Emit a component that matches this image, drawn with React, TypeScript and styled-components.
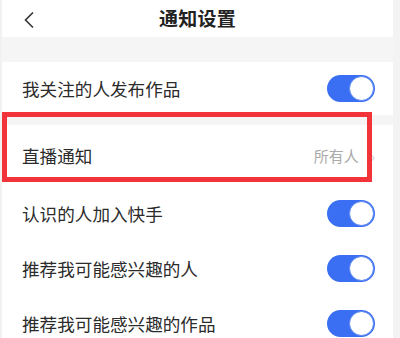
import React from "react";
import styled, { createGlobalStyle } from "styled-components";

const Global = createGlobalStyle`
  html, body { margin: 0; padding: 0; background: #f3f3f3; }
  body { font-family: "Noto Sans CJK SC", "Noto Sans", sans-serif; }
  * { box-sizing: border-box; }
`;

const Page = styled.div`
  width: 393px;
  height: 338px;
  overflow: hidden;
  background: #f5f5f5;
  display: flex;
  flex-direction: column;
  border-left: 2px solid #f1f1f1;
`;

const Header = styled.div`
  height: 37px;
  background: #fff;
  display: flex;
  align-items: center;
  justify-content: center;
  position: relative;
  flex-shrink: 0;
`;

const Back = styled.svg`
  position: absolute;
  left: 20px;
  top: 11px;
`;

const Title = styled.div`
  font-size: 19px;
  font-weight: 600;
  color: #222;
  letter-spacing: 0.3px;
  margin-top: -2px;
`;

const Gap = styled.div<{ $h: number }>`
  height: ${(p) => p.$h}px;
  flex-shrink: 0;
`;

const Row = styled.div<{ $h: number }>`
  height: ${(p) => p.$h}px;
  background: #fff;
  display: flex;
  align-items: center;
  padding: 0 18px 0 20px;
  flex-shrink: 0;
`;

const Label = styled.div`
  flex: 1;
  font-size: 17.6px;
  color: #2b2b2b;
`;

const Value = styled.div`
  font-size: 15px;
  color: #aaa;
  margin-right: 12px;
`;

const Chevron = styled.span`
  font-size: 14px;
  color: #ccc;
  margin-right: 0px;
`;

const Toggle = styled.div`
  width: 48px;
  height: 27px;
  border-radius: 14px;
  background: #3a6ff3;
  position: relative;
`;

const Knob = styled.div`
  position: absolute;
  right: 1px;
  top: 1px;
  width: 25px;
  height: 25px;
  border-radius: 50%;
  background: #fff;
  border: 1px solid #5a86f0;
`;

const Highlight = styled.div`
  position: absolute;
  left: 2px;
  top: 112px;
  width: 370px;
  height: 70px;
  border: 5px solid #f2333a;
  pointer-events: none;
`;

const Frame = styled.div`
  position: relative;
`;

const ToggleRow = ({ label, h = 55 }: { label: string; h?: number }) => (
  <Row $h={h}>
    <Label>{label}</Label>
    <Toggle>
      <Knob />
    </Toggle>
  </Row>
);

export default function App() {
  return (
    <>
      <Global />
      <Frame>
        <Page>
          <Header>
            <Back width="14" height="18" viewBox="0 0 14 18">
              <path d="M11 1.5 L3.5 9 L11 16.5" fill="none" stroke="#333" strokeWidth="1.6" />
            </Back>
            <Title>通知设置</Title>
          </Header>
          <Gap $h={25} />
          <ToggleRow label="我关注的人发布作品" h={53} />
          <Gap $h={10} />
          <Row $h={61}>
            <Label>直播通知</Label>
            <Value>所有人</Value>
            <Chevron>›</Chevron>
          </Row>
          <ToggleRow label="认识的人加入快手" />
          <ToggleRow label="推荐我可能感兴趣的人" />
          <ToggleRow label="推荐我可能感兴趣的作品" />
        </Page>
        <Highlight />
      </Frame>
    </>
  );
}
